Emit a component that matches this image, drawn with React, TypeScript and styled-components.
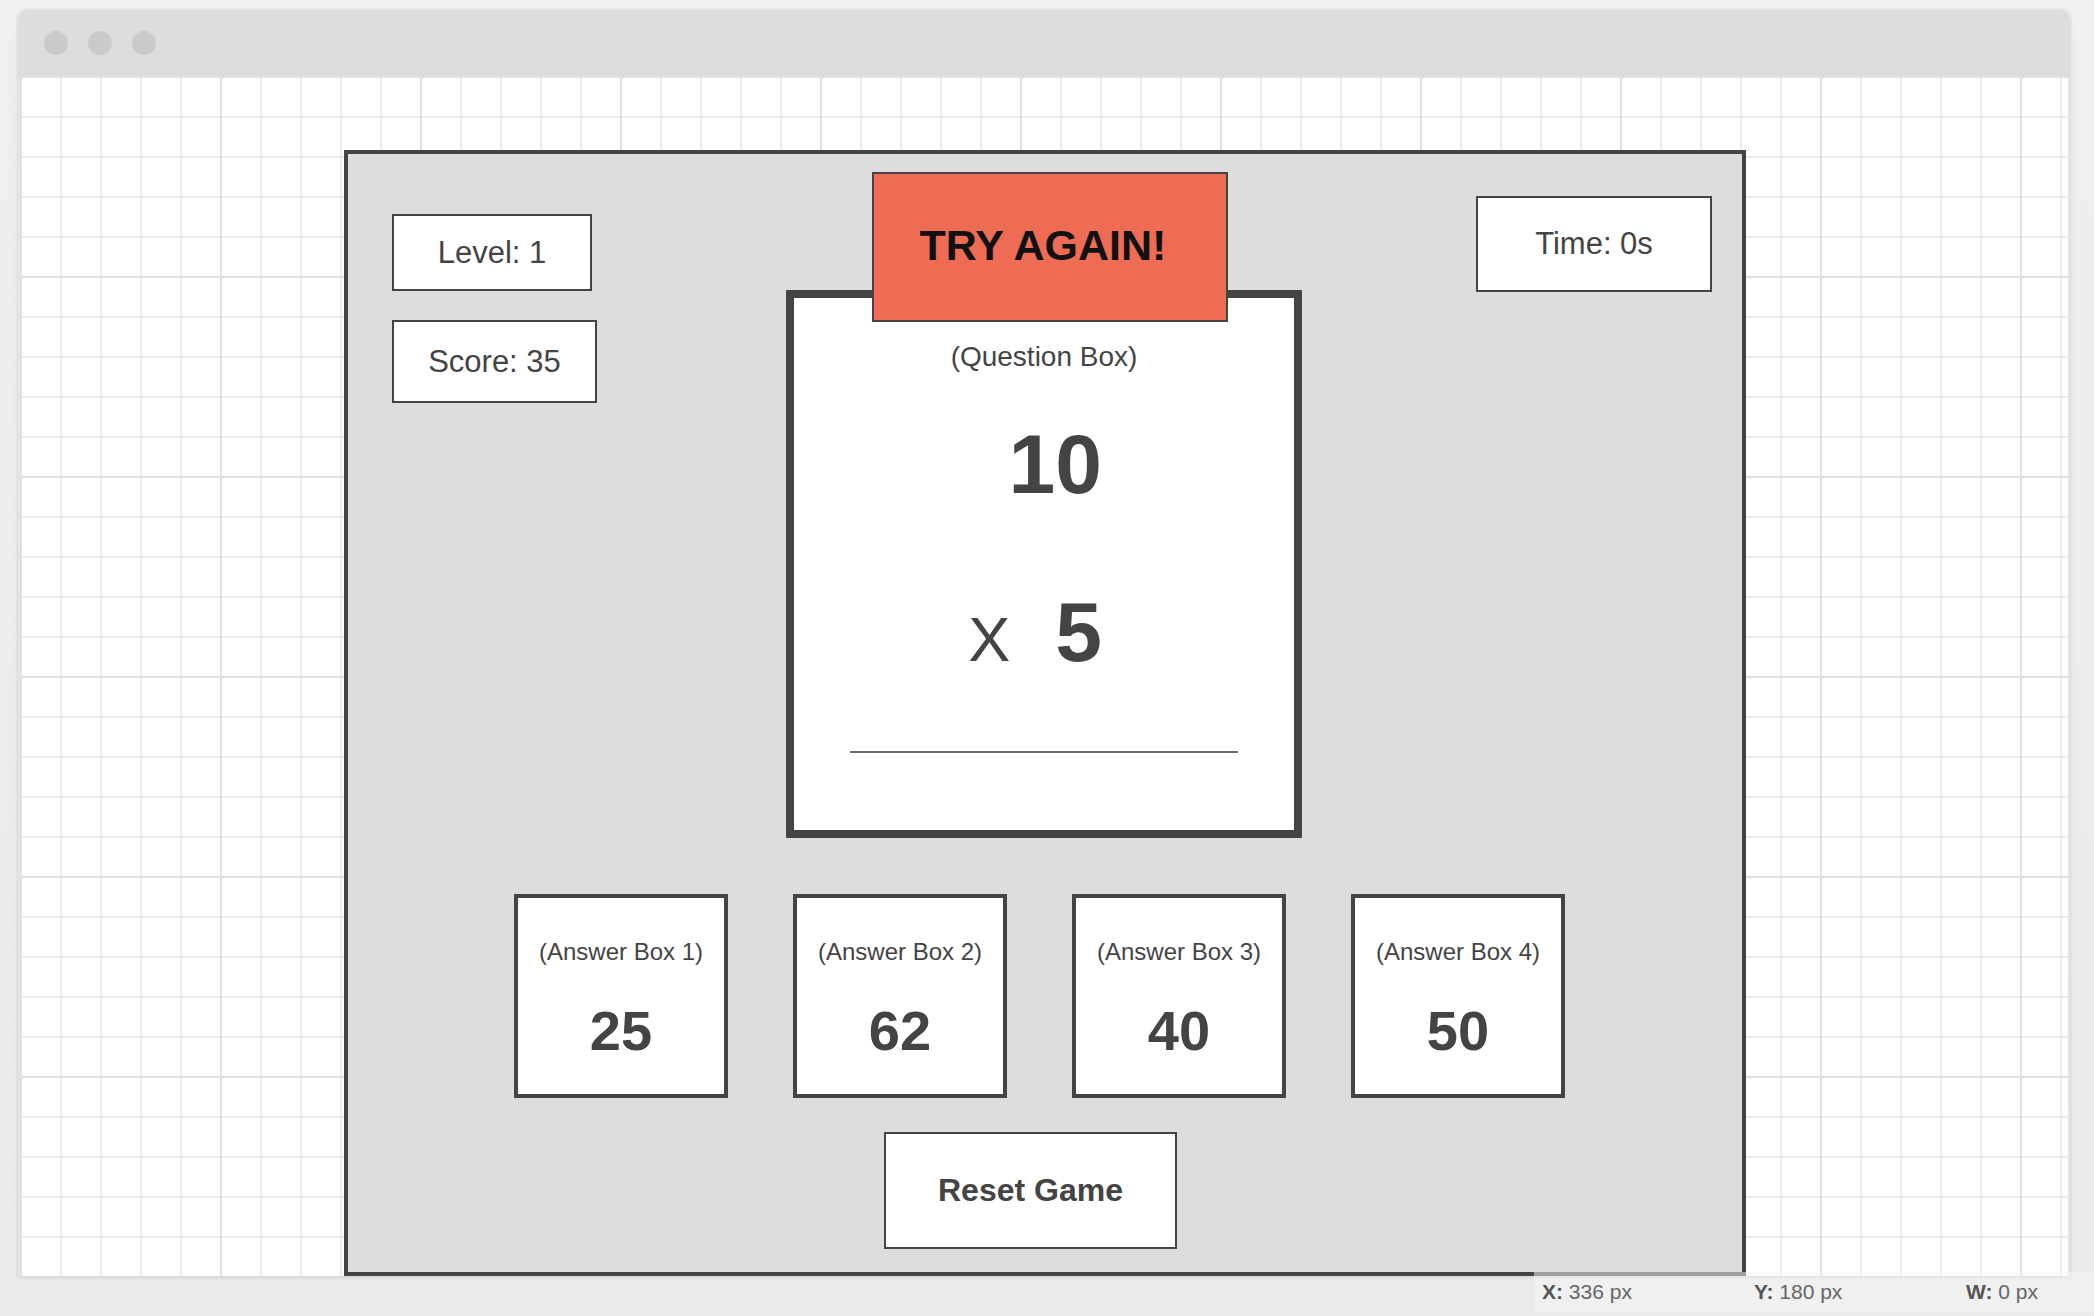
import styled, { createGlobalStyle } from 'styled-components';

const GlobalStyle = createGlobalStyle`
	html, body {
		margin: 0;
		padding: 0;
		background: #ededed;
	}
	body {
		font-family: "Liberation Sans", Arial, Helvetica, sans-serif;
		color: #444;
	}
`;

const Page = styled.div`
	position: relative;
	width: 2094px;
	height: 1316px;
	box-sizing: border-box;
	padding: 10px 0 0 18px;
	overflow: hidden;
	background: linear-gradient(#efefef, #eaeaea);
`;

const Window = styled.div`
	width: 2052px;
	height: 1266px;
	display: flex;
	flex-direction: column;
	border-radius: 10px 10px 0 0;
	box-shadow: 0 1px 4px rgba(0, 0, 0, 0.14);
`;

const TitleBar = styled.div`
	height: 66px;
	flex: none;
	display: flex;
	align-items: center;
	gap: 20px;
	padding-left: 26px;
	background: #dddddd;
	border-radius: 10px 10px 0 0;
`;

const Dot = styled.span`
	width: 24px;
	height: 24px;
	border-radius: 50%;
	background: #cacaca;
`;

const Canvas = styled.div`
	flex: 1;
	overflow: hidden;
	border-left: 2px solid #e4e4e4;
	border-right: 2px solid #e4e4e4;
	background-color: #fff;
	background-image:
		linear-gradient(to right, #e1e1e1 2px, transparent 2px),
		linear-gradient(to bottom, #e1e1e1 2px, transparent 2px),
		linear-gradient(to right, #ececec 2px, transparent 2px),
		linear-gradient(to bottom, #ececec 2px, transparent 2px);
	background-size: 200px 200px, 200px 200px, 40px 40px, 40px 40px;
`;

const Panel = styled.div`
	margin: 74px 0 0 324px;
	width: 1402px;
	height: 1126px;
	box-sizing: border-box;
	border: 4px solid #444;
	background: #dddddd;
	display: flex;
	flex-direction: column;
`;

const TopRow = styled.div`
	display: flex;
	align-items: flex-start;
`;

const InfoColumn = styled.div`
	margin: 60px 0 0 44px;
	display: flex;
	flex-direction: column;
	align-items: flex-start;
	gap: 29px;
`;

const InfoBox = styled.div<{ $w: number; $h: number }>`
	width: ${(p) => p.$w}px;
	height: ${(p) => p.$h}px;
	box-sizing: border-box;
	border: 2px solid #444;
	background: #fff;
	display: flex;
	align-items: center;
	justify-content: center;
	font-size: 31px;
	color: #444;
`;

const TimeBox = styled(InfoBox)`
	margin: 42px 0 0 174px;
`;

const QuestionBox = styled.div`
	position: relative;
	margin: 136px 0 0 189px;
	width: 516px;
	height: 548px;
	box-sizing: border-box;
	border: 8px solid #444;
	background: #fff;
	display: flex;
	flex-direction: column;
	align-items: center;
	padding-top: 43px;
`;

const Banner = styled.div`
	position: absolute;
	left: 78px;
	top: -126px;
	width: 356px;
	height: 150px;
	box-sizing: border-box;
	border: 2px solid #444;
	padding: 0 14px 4px 0;
	background: #ef6c54;
	display: flex;
	align-items: center;
	justify-content: center;
	font-size: 43px;
	font-weight: bold;
	color: #111;
`;

const Caption = styled.div`
	font-size: 28px;
	line-height: 32px;
	color: #444;
`;

const Operand = styled.div<{ $mt: number }>`
	align-self: flex-end;
	margin: ${(p) => p.$mt}px 192px 0 0;
	display: flex;
	align-items: baseline;
	gap: 45px;
	font-size: 84px;
	line-height: 84px;
	font-weight: bold;
	color: #444;
`;

const Operator = styled.span`
	font-size: 63px;
	font-weight: normal;
	line-height: 1;
`;

const AnswerLine = styled.div`
	margin-top: 77px;
	width: 388px;
	height: 2px;
	background: #666;
`;

const AnswerRow = styled.div`
	margin: 56px 0 0 166px;
	display: flex;
	gap: 65px;
`;

const AnswerBox = styled.div`
	width: 214px;
	height: 204px;
	box-sizing: border-box;
	border: 4px solid #444;
	background: #fff;
	display: flex;
	flex-direction: column;
	align-items: center;
	padding-top: 40px;
	color: #444;
`;

const AnswerLabel = styled.div`
	font-size: 24px;
	line-height: 28px;
	white-space: nowrap;
`;

const AnswerValue = styled.div`
	margin-top: 37px;
	font-size: 56px;
	line-height: 56px;
	font-weight: bold;
`;

const ResetButton = styled.button`
	margin: 34px 0 0 536px;
	width: 293px;
	height: 117px;
	box-sizing: border-box;
	border: 2px solid #444;
	background: #fff;
	padding: 0;
	font-family: inherit;
	font-size: 32px;
	font-weight: bold;
	color: #444;
	cursor: pointer;
`;

const StatusBar = styled.div`
	position: absolute;
	left: 1534px;
	top: 1272px;
	right: 0;
	height: 40px;
	box-sizing: border-box;
	padding-left: 8px;
	display: flex;
	align-items: center;
	overflow: hidden;
	background: rgba(245, 245, 245, 0.52);
	font-size: 21px;
	color: #666;
`;

const StatusItem = styled.div`
	flex: none;
	width: 212px;
	white-space: nowrap;
	b {
		color: #555;
	}
`;

const answers = [25, 62, 40, 50];

function App() {
	return (
		<Page>
			<GlobalStyle />
			<Window>
				<TitleBar>
					<Dot />
					<Dot />
					<Dot />
				</TitleBar>
				<Canvas>
					<Panel>
						<TopRow>
							<InfoColumn>
								<InfoBox $w={200} $h={77}>Level: 1</InfoBox>
								<InfoBox $w={205} $h={83}>Score: 35</InfoBox>
							</InfoColumn>
							<QuestionBox>
								<Banner>TRY AGAIN!</Banner>
								<Caption>(Question Box)</Caption>
								<Operand $mt={49}>10</Operand>
								<Operand $mt={84}>
									<Operator>X</Operator>
									<span>5</span>
								</Operand>
								<AnswerLine />
							</QuestionBox>
							<TimeBox $w={236} $h={96}>Time: 0s</TimeBox>
						</TopRow>
						<AnswerRow>
							{answers.map((value, i) => (
								<AnswerBox key={i}>
									<AnswerLabel>(Answer Box {i + 1})</AnswerLabel>
									<AnswerValue>{value}</AnswerValue>
								</AnswerBox>
							))}
						</AnswerRow>
						<ResetButton>Reset Game</ResetButton>
					</Panel>
				</Canvas>
			</Window>
			<StatusBar>
				<StatusItem>
					<b>X:</b> 336 px
				</StatusItem>
				<StatusItem>
					<b>Y:</b> 180 px
				</StatusItem>
				<StatusItem>
					<b>W:</b> 0 px
				</StatusItem>
			</StatusBar>
		</Page>
	);
}

export default App;
